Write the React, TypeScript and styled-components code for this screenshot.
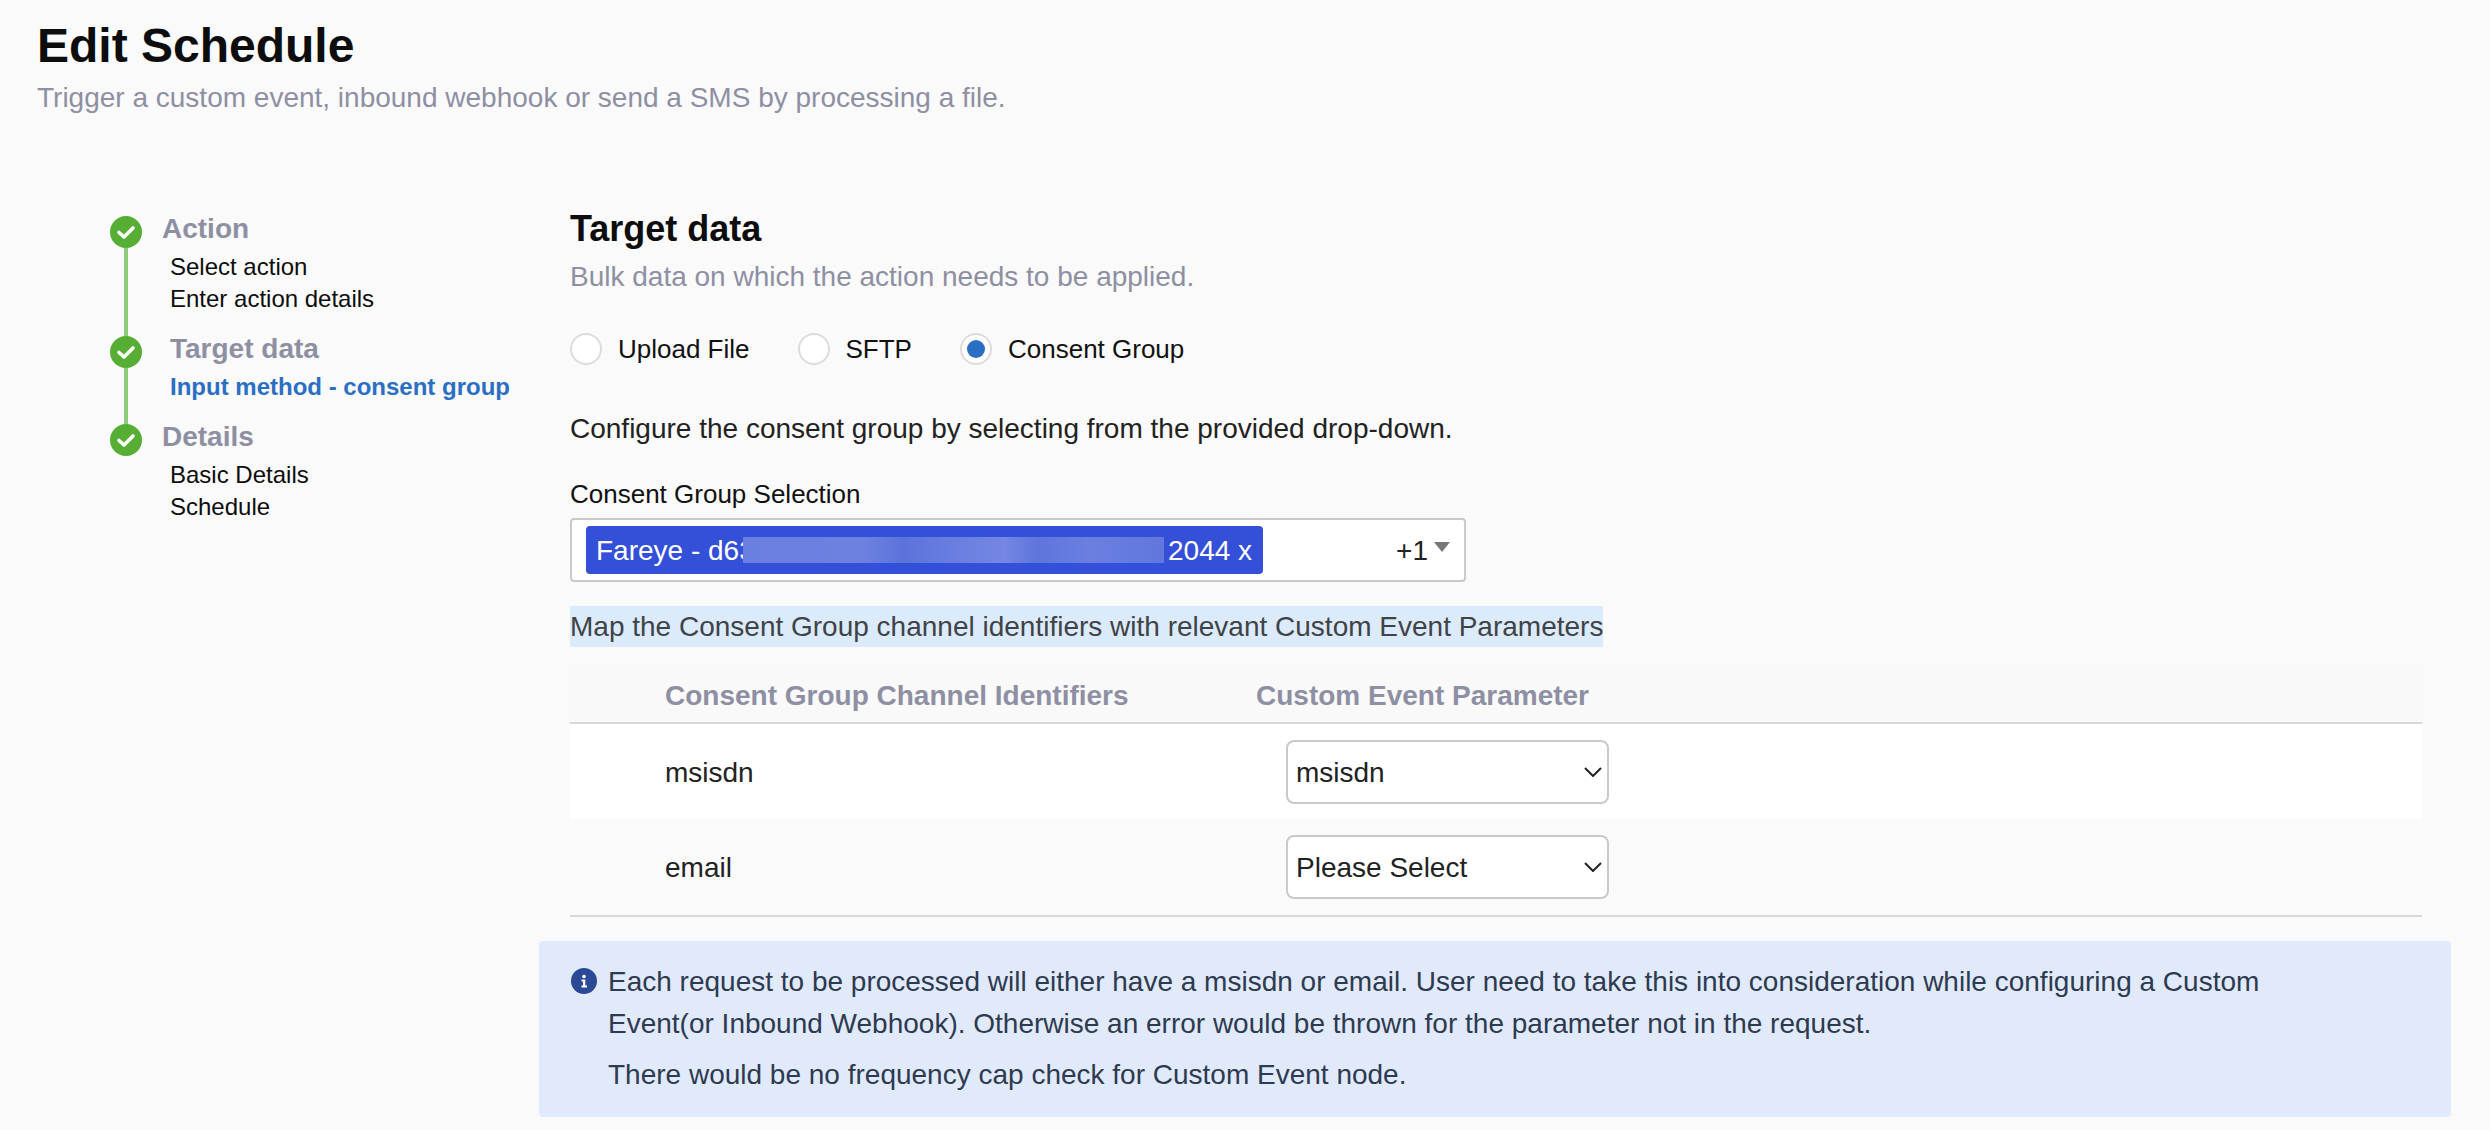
import React from "react";
import styled, { createGlobalStyle } from "styled-components";

const GlobalStyle = createGlobalStyle`
  html, body {
    margin: 0;
    padding: 0;
    background: #fafafa;
    font-family: "Liberation Sans", Arial, sans-serif;
  }
`;

const Page = styled.div`
  width: 2490px;
  height: 1130px;
  overflow: hidden;
  padding-top: 18px;
  box-sizing: border-box;
`;

const Header = styled.header`
  padding-left: 37px;
`;

const Title = styled.h1`
  margin: 0;
  font-size: 48px;
  line-height: 56px;
  font-weight: 700;
  color: #0d0d0d;
`;

const Subtitle = styled.p`
  margin: 6px 0 0;
  font-size: 28px;
  line-height: 36px;
  color: #8e8fa3;
`;

const Body = styled.div`
  display: flex;
  margin-top: 91px;
`;

const Stepper = styled.aside`
  width: 460px;
  margin-left: 110px;
  padding-top: 9px;
`;

const Step = styled.div<{ $height: number }>`
  display: flex;
  height: ${(p) => p.$height}px;
`;

const Rail = styled.div`
  display: flex;
  flex-direction: column;
  align-items: center;
  width: 32px;
`;

const Dot = styled.span`
  display: flex;
  flex: none;
  align-items: center;
  justify-content: center;
  width: 32px;
  height: 32px;
  border-radius: 50%;
  background: #56ae35;
`;

const Connector = styled.span`
  flex: 1;
  width: 4px;
  background: #8fcb7a;
`;

const StepBody = styled.div`
  padding-left: 28px;
`;

const StepTitle = styled.div<{ $outdent?: boolean }>`
  margin-left: ${(p) => (p.$outdent ? "-8px" : "0")};
  font-size: 28px;
  line-height: 26px;
  font-weight: 700;
  color: #8e8fa3;
`;

const StepList = styled.div`
  margin-top: 9px;
`;

const StepItem = styled.div<{ $active?: boolean }>`
  font-size: 24px;
  line-height: 32px;
  font-weight: ${(p) => (p.$active ? 700 : 400)};
  color: ${(p) => (p.$active ? "#2b6fc4" : "#0d0d0d")};
`;

const Main = styled.main`
  width: 1852px;
`;

const Heading = styled.h2`
  margin: 0;
  font-size: 36px;
  line-height: 44px;
  font-weight: 700;
  color: #0d0d0d;
`;

const HeadingNote = styled.p`
  margin: 8px 0 0;
  font-size: 28px;
  line-height: 36px;
  color: #8e8fa3;
`;

const RadioRow = styled.div`
  display: flex;
  gap: 48px;
  margin-top: 38px;
`;

const RadioOption = styled.label`
  display: flex;
  align-items: center;
  gap: 16px;
  font-size: 26px;
  line-height: 32px;
  color: #111;
`;

const RadioCircle = styled.span<{ $checked?: boolean }>`
  display: flex;
  align-items: center;
  justify-content: center;
  width: 32px;
  height: 32px;
  box-sizing: border-box;
  border: 2px solid #dcdcdc;
  border-radius: 50%;
  background: #fff;

  &::after {
    content: "";
    display: ${(p) => (p.$checked ? "block" : "none")};
    width: 18px;
    height: 18px;
    border-radius: 50%;
    background: #2b6fc4;
  }
`;

const Hint = styled.p`
  margin: 46px 0 0;
  font-size: 28px;
  line-height: 36px;
  color: #222;
`;

const FieldLabel = styled.div`
  margin-top: 31px;
  font-size: 26px;
  line-height: 32px;
  color: #111;
`;

const MultiSelect = styled.div`
  display: flex;
  align-items: center;
  box-sizing: border-box;
  width: 896px;
  height: 64px;
  margin-top: 8px;
  padding: 0 14px;
  border: 2px solid #c9c9c9;
  border-radius: 4px;
  background: #fff;
`;

const Chip = styled.div`
  display: flex;
  align-items: center;
  width: 677px;
  height: 48px;
  box-sizing: border-box;
  padding: 2px 10px 0;
  border-radius: 4px;
  background: #3550d8;
  color: #fff;
  font-size: 28px;
  white-space: nowrap;
`;

const ChipStart = styled.span`
  width: 147px;
`;

// solid patch that lies over the end of the id, as in the reference
const Redacted = styled.span`
  position: relative;
  width: 421px;
  height: 26px;
  margin: -2px 4px 0 0;
  background: linear-gradient(
    90deg,
    #6a80e0,
    #6c80e1 18%,
    #6d82e0 28%,
    #5c73dc 38%,
    #697ee0 50%,
    #7487e2 62%,
    #5f75dd 70%,
    #6a7fe0 82%,
    #6177dd
  );
`;

const MoreCount = styled.span`
  margin-left: auto;
  padding-top: 2px;
  font-size: 28px;
  color: #222;
`;

const Caret = styled.span`
  width: 0;
  height: 0;
  margin: -6px 0 0 6px;
  border-left: 8px solid transparent;
  border-right: 8px solid transparent;
  border-top: 10px solid #777;
`;

const MapNote = styled.div`
  display: inline-block;
  height: 41px;
  margin-top: 24px;
  background: #dcebfc;
  font-size: 28px;
  line-height: 42px;
  color: #3f4347;
  vertical-align: top;
`;

const Table = styled.div`
  margin-top: 22px;
`;

const columns = "grid-template-columns: 591px 1fr;";

const HeadRow = styled.div`
  display: grid;
  ${columns}
  height: 55px;
  box-sizing: border-box;
  padding-left: 95px;
  border-bottom: 2px solid #d8d8d8;
  background: #f9f9f9;
  font-size: 28px;
  line-height: 54px;
  font-weight: 700;
  color: #8e8fa3;
`;

const Row = styled.div<{ $white?: boolean; $last?: boolean }>`
  display: grid;
  ${columns}
  align-items: center;
  height: ${(p) => (p.$last ? "98px" : "95px")};
  box-sizing: border-box;
  padding-left: 95px;
  background: ${(p) => (p.$white ? "#fff" : "#fafafa")};
  border-bottom: ${(p) => (p.$last ? "2px solid #d8d8d8" : "none")};
  font-size: 28px;
  color: #222;
`;

const CellText = styled.span`
  padding-top: 2px;
`;

const SelectBox = styled.div`
  display: flex;
  align-items: center;
  justify-content: space-between;
  box-sizing: border-box;
  width: 323px;
  height: 64px;
  margin-left: 30px;
  padding: 0 5px 0 8px;
  border: 2px solid #c9c9c9;
  border-radius: 8px;
  background: #fff;
  font-size: 28px;
  color: #222;
`;

const InfoBox = styled.section`
  display: flex;
  gap: 11px;
  margin: 24px -29px 0 -31px;
  padding: 19px 32px 21px;
  border-radius: 4px;
  background: #e1eafb;
  font-size: 28px;
  line-height: 42px;
  color: #2e3a50;
`;

const InfoIcon = styled.svg`
  flex: none;
  width: 26px;
  height: 26px;
  margin-top: 8px;
`;

const InfoText = styled.div`
  width: 1700px;
  padding-top: 1px;
`;

const InfoLine = styled.p`
  margin: 0;

  & + & {
    margin-top: 9px;
  }
`;

const Check = () => (
  <svg width="20" height="15" viewBox="0 0 20 15" fill="none">
    <path d="M3 7.5 8 12 17 3" stroke="#fff" strokeWidth="3.6" strokeLinecap="round" strokeLinejoin="round" />
  </svg>
);

const Chevron = () => (
  <svg width="18" height="10" viewBox="0 0 18 10" fill="none">
    <path d="M1 1 9 9 17 1" stroke="#222" strokeWidth="2" />
  </svg>
);

const steps = [
  { title: "Action", items: ["Select action", "Enter action details"], height: 120 },
  { title: "Target data", items: ["Input method - consent group"], height: 88, active: true },
  { title: "Details", items: ["Basic Details", "Schedule"], height: 120 },
];

const App: React.FC = () => {
  return (
    <Page>
      <GlobalStyle />
      <Header>
        <Title>Edit Schedule</Title>
        <Subtitle>Trigger a custom event, inbound webhook or send a SMS by processing a file.</Subtitle>
      </Header>
      <Body>
        <Stepper>
          {steps.map((step, i) => (
            <Step key={step.title} $height={step.height}>
              <Rail>
                <Dot>
                  <Check />
                </Dot>
                {i < steps.length - 1 && <Connector />}
              </Rail>
              <StepBody>
                <StepTitle $outdent={!step.active}>{step.title}</StepTitle>
                <StepList>
                  {step.items.map((item) => (
                    <StepItem key={item} $active={step.active}>
                      {item}
                    </StepItem>
                  ))}
                </StepList>
              </StepBody>
            </Step>
          ))}
        </Stepper>
        <Main>
          <Heading>Target data</Heading>
          <HeadingNote>Bulk data on which the action needs to be applied.</HeadingNote>
          <RadioRow>
            <RadioOption>
              <RadioCircle />
              Upload File
            </RadioOption>
            <RadioOption>
              <RadioCircle />
              SFTP
            </RadioOption>
            <RadioOption>
              <RadioCircle $checked />
              Consent Group
            </RadioOption>
          </RadioRow>
          <Hint>Configure the consent group by selecting from the provided drop-down.</Hint>
          <FieldLabel>Consent Group Selection</FieldLabel>
          <MultiSelect>
            <Chip>
              <ChipStart>Fareye - d63</ChipStart>
              <Redacted />
              2044 x
            </Chip>
            <MoreCount>+1</MoreCount>
            <Caret />
          </MultiSelect>
          <MapNote>Map the Consent Group channel identifiers with relevant Custom Event Parameters</MapNote>
          <Table>
            <HeadRow>
              <span>Consent Group Channel Identifiers</span>
              <span>Custom Event Parameter</span>
            </HeadRow>
            <Row $white>
              <CellText>msisdn</CellText>
              <SelectBox>
                <CellText>msisdn</CellText>
                <Chevron />
              </SelectBox>
            </Row>
            <Row $last>
              <CellText>email</CellText>
              <SelectBox>
                <CellText>Please Select</CellText>
                <Chevron />
              </SelectBox>
            </Row>
          </Table>
          <InfoBox>
            <InfoIcon viewBox="0 0 26 26">
              <circle cx="13" cy="13" r="13" fill="#2a4a95" />
              <circle cx="13" cy="8.5" r="1.8" fill="#fff" />
              <path d="M10.5 11.5h3.8v6h1.7v2h-5.5v-2h1.5v-4h-1.5z" fill="#fff" />
            </InfoIcon>
            <InfoText>
              <InfoLine>
                Each request to be processed will either have a msisdn or email. User need to take this into
                consideration while configuring a Custom Event(or Inbound Webhook). Otherwise an error would be thrown
                for the parameter not in the request.
              </InfoLine>
              <InfoLine>There would be no frequency cap check for Custom Event node.</InfoLine>
            </InfoText>
          </InfoBox>
        </Main>
      </Body>
    </Page>
  );
};

export default App;
